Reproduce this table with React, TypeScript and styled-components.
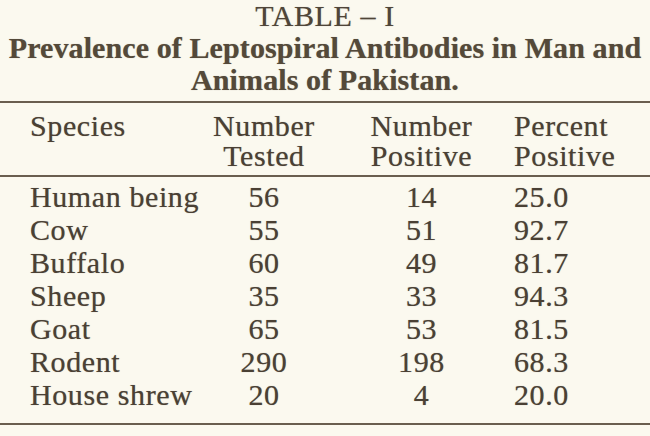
import styled, { createGlobalStyle } from "styled-components";

const GlobalStyle = createGlobalStyle`
  html, body {
    margin: 0;
    padding: 0;
    background: #fbf9ef;
  }
  body {
    width: 650px;
    height: 436px;
    overflow: hidden;
    font-family: "Liberation Serif", "Times New Roman", serif;
    color: #4a4034;
    text-shadow: 0 0 0.8px rgba(74, 64, 52, 0.55);
  }
`;

const Page = styled.div`
  display: flex;
  flex-direction: column;
  width: 650px;
`;

const Caption = styled.div`
  display: flex;
  flex-direction: column;
  align-items: center;
  line-height: 32px;
  font-size: 30px;
  text-align: center;
`;

const TableNumber = styled.div`
  font-weight: normal;
  letter-spacing: 0.6px;
  color: #4f4538;
`;

const TitleLine = styled.div`
  font-weight: bold;
  letter-spacing: 0.1px;
  color: #544939;
  white-space: nowrap;
`;

const Rule = styled.div<{ $gap: number }>`
  margin-top: ${(p) => p.$gap}px;
  height: 2px;
  background: #5a4c3d;
  opacity: 0.9;
`;

const Grid = styled.div<{ $lineHeight: number }>`
  display: grid;
  grid-template-columns: 169px 130px 185px 1fr;
  padding-left: 30px;
  font-size: 30px;
  letter-spacing: 0.6px;
  line-height: ${(p) => p.$lineHeight}px;
`;

const Head = styled(Grid)`
  padding-top: 8px;
  padding-bottom: 4px;
`;

const Body = styled(Grid)`
  padding-top: 3px;
  padding-bottom: 12px;
`;

const Cell = styled.div<{ $align: "left" | "center" }>`
  text-align: ${(p) => p.$align};
  white-space: nowrap;
`;

type Row = {
  species: string;
  tested: number;
  positive: number;
  percent: string;
};

const rows: Row[] = [
  { species: "Human being", tested: 56, positive: 14, percent: "25.0" },
  { species: "Cow", tested: 55, positive: 51, percent: "92.7" },
  { species: "Buffalo", tested: 60, positive: 49, percent: "81.7" },
  { species: "Sheep", tested: 35, positive: 33, percent: "94.3" },
  { species: "Goat", tested: 65, positive: 53, percent: "81.5" },
  { species: "Rodent", tested: 290, positive: 198, percent: "68.3" },
  { species: "House shrew", tested: 20, positive: 4, percent: "20.0" },
];

const App = () => {
  return (
    <>
      <GlobalStyle />
      <Page>
        <Caption>
          <TableNumber>TABLE – I</TableNumber>
          <TitleLine>Prevalence of Leptospiral Antibodies in Man and</TitleLine>
          <TitleLine>Animals of Pakistan.</TitleLine>
        </Caption>
        <Rule $gap={5} />
        <Head $lineHeight={30}>
          <Cell $align="left">Species</Cell>
          <Cell $align="center">
            Number
            <br />
            Tested
          </Cell>
          <Cell $align="center">
            Number
            <br />
            Positive
          </Cell>
          <Cell $align="left">
            Percent
            <br />
            Positive
          </Cell>
        </Head>
        <Rule $gap={0} />
        <Body $lineHeight={33}>
          {rows.map((row) => [
            <Cell $align="left" key={row.species + "-s"}>
              {row.species}
            </Cell>,
            <Cell $align="center" key={row.species + "-t"}>
              {row.tested}
            </Cell>,
            <Cell $align="center" key={row.species + "-p"}>
              {row.positive}
            </Cell>,
            <Cell $align="left" key={row.species + "-c"}>
              {row.percent}
            </Cell>,
          ])}
        </Body>
        <Rule $gap={0} />
      </Page>
    </>
  );
};

export default App;
